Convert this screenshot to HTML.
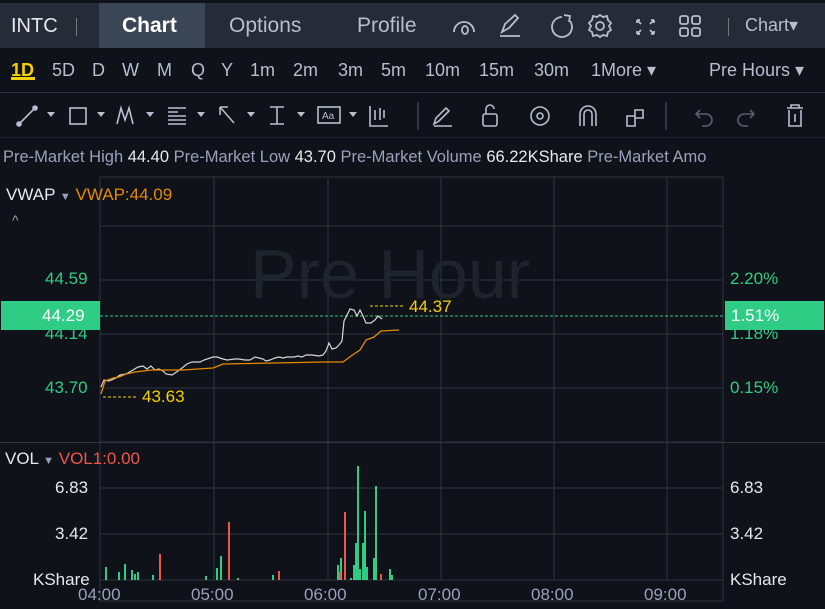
<!DOCTYPE html>
<html><head><meta charset="utf-8"><style>
*{margin:0;padding:0;box-sizing:border-box}
body{width:825px;height:609px;background:#0f1218;font-family:"Liberation Sans",sans-serif;overflow:hidden;position:relative;color:#e6e8ee}
.top{position:absolute;left:0;top:3px;width:825px;height:45px;background:#262b38}
.t{position:absolute;font-size:21px;color:#b8bdd0;top:13px}
.row2{position:absolute;top:48px;left:0;width:825px;height:45px;border-bottom:1px solid #2a2f3a}
.r2{position:absolute;top:60px;font-size:18px;color:#b8bdd0}
.info{position:absolute;top:148px;left:3px;font-size:16.5px;white-space:nowrap;color:#9aa0bc}
.info b{font-weight:normal;color:#e6e8ee}
.ax{position:absolute;font-size:17px}
</style></head><body>
<div class="top"></div>
<div style="position:absolute;left:99px;top:3px;width:106px;height:45px;background:#3a4556"></div>
<div class="t" style="left:11px;color:#e6e8ee;top:15px;font-size:20px">INTC</div>
<div style="position:absolute;left:76px;top:18px;width:1px;height:18px;background:#777"></div>
<div class="t" style="left:122px;color:#fff;font-weight:bold;top:14px">Chart</div>
<div class="t" style="left:229px;top:14px">Options</div>
<div class="t" style="left:357px;top:14px">Profile</div>
<svg style="position:absolute;left:450px;top:12px" width="270" height="28" fill="none" stroke="#b8bdd0" stroke-width="1.8">
<path d="M4 20a10 10 0 1 1 20 0M12 18a3 4 0 1 0 6 0a3 4 0 0 0-6 0"/>
<path d="M50 24h20M52 20l3-8 10-9 3 3-9 10z"/>
<path d="M112 5a10 10 0 1 0 8 4M114 3l6 1-1 6"/>
<circle cx="150" cy="14" r="4"/><path d="M150 3l3 2 4-1 1 4 3 3-2 3 2 4-3 2-1 4-4-1-3 2-3-2-4 1-1-4-3-2 2-4-2-3 3-3 1-4 4 1z"/>
<path d="M187 8l4 4M187 8v3M187 8h3M204 8l-4 4M204 8v3M204 8h-3M187 22l4-4M187 22v-3M187 22h3M204 22l-4-4M204 22v-3M204 22h-3"/>
<rect x="230" y="4" width="8" height="8" rx="2"/><rect x="242" y="4" width="8" height="8" rx="2"/><rect x="230" y="16" width="8" height="8" rx="2"/><rect x="242" y="16" width="8" height="8" rx="2"/>
</svg>
<div style="position:absolute;left:728px;top:18px;width:1px;height:18px;background:#777"></div>
<div class="t" style="left:745px;font-size:18px;top:15px">Chart▾</div>
<div class="row2"></div>
<div class="r2" style="left:11px;color:#f4d000;font-weight:bold">1D</div>
<div style="position:absolute;left:11px;top:77px;width:24px;height:3px;background:#f4d000"></div>
<div class="r2" style="left:52px">5D</div><div class="r2" style="left:92px">D</div><div class="r2" style="left:122px">W</div><div class="r2" style="left:157px">M</div><div class="r2" style="left:191px">Q</div><div class="r2" style="left:221px">Y</div><div class="r2" style="left:250px">1m</div><div class="r2" style="left:293px">2m</div><div class="r2" style="left:338px">3m</div><div class="r2" style="left:381px">5m</div><div class="r2" style="left:425px">10m</div><div class="r2" style="left:479px">15m</div><div class="r2" style="left:534px">30m</div><div class="r2" style="left:591px">1More ▾</div><div class="r2" style="left:709px">Pre Hours ▾</div>
<svg style="position:absolute;left:0;top:94px" width="825" height="44" fill="none" stroke="#b8bdd0" stroke-width="1.6">
<path d="M19 30l16-16"/><circle cx="19" cy="30" r="2" fill="#b8bdd0"/><circle cx="35" cy="14" r="2" fill="#b8bdd0"/>
<path d="M47 18h8l-4 5z M97 18h8l-4 5z M146 18h8l-4 5z M197 18h8l-4 5z M247 18h8l-4 5z M297 18h8l-4 5z M349 18h8l-4 5z" fill="#b8bdd0" stroke="none"/>
<rect x="70" y="14" width="16" height="16"/>
<path d="M117 30l4-16 4 12 4-12 4 16"/>
<path d="M168 14h18M168 18h10M168 22h18M168 26h18M168 30h18"/>
<path d="M220 13l14 16M220 13v8M220 13h8"/>
<path d="M270 13h14M270 30h14M277 13v17"/>
<rect x="318" y="13" width="22" height="16"/><text x="322" y="25" font-size="10" fill="#b8bdd0" stroke="none">Aa</text>
<path d="M370 12v20h18M375 16v10M380 14v12M384 16v8"/>
<path d="M418 8v28" stroke="#3a3f4a"/>
<path d="M434 30l2-6 10-10 3 3-10 10zM434 32h18"/>
<rect x="483" y="20" width="14" height="12" rx="2"/><path d="M486 20v-5a4 4 0 0 1 8 0"/>
<circle cx="540" cy="22" r="9"/><circle cx="540" cy="22" r="3"/>
<path d="M580 32v-12a8 8 0 0 1 16 0v12M584 32v-12a4 4 0 0 1 8 0v12"/>
<path d="M627 22h8v10h-8zM635 16h8v8h-8z"/>
<path d="M666 8v28" stroke="#3a3f4a"/>
<path d="M700 16l-4 4 4 4M696 20h10a6 6 0 0 1 0 12h-4" stroke="#5a5f6a"/>
<path d="M750 16l4 4-4 4M754 20h-10a6 6 0 0 0 0 12h4" stroke="#5a5f6a"/>
<path d="M787 14h16M791 14v-3h8v3M789 16v16h12v-16M795 20v8"/>
</svg>
<div style="position:absolute;top:137px;left:0;width:825px;height:1px;background:#1e222b"></div>
<div class="info">Pre-Market High <b>44.40</b> Pre-Market Low <b>43.70</b> Pre-Market Volume <b>66.22KShare</b> Pre-Market Amo</div>
<svg style="position:absolute;left:0;top:0" width="825" height="609">
<g stroke="#2e3442" stroke-width="1">
<path d="M100 177h623v424H100z" fill="none"/>
<path d="M100 226h623M100 280h623M100 334h623M100 388h623M100 442h623M100 488h623M100 534h623M100 580h623"/>
<path d="M214 177v403M328 177v403M441 177v403M554 177v403M667 177v403"/>
</g>
<text x="250" y="298" font-size="70" fill="#1f232b">Pre Hour</text>
<path d="M100 316h623" stroke="#2ecc85" stroke-dasharray="3,2"/>
<path d="M101 387l3-7 5 1 7-3 4-3 6-1 7-4 5-3 5-1 4 3 4-3 4 4 4-1 4 2 3 3 6 1 6-4 4-3 5-4 5-2 8 0 4-2 9-3 4 0 6 2 4 1 8-1 4 0 6 1 5 0 5-3 4 1 4 1 3 2 4-1 5-2 4-1 4 1 4-1 7 0 4-1 4 1 4-2 6 0 7 1 4-1 3-4 3-8 3 6 4-1 3-3 3-4 2-20 6-12 4 1 3 6 3-6 3 6 3 7 5 0 4-3 3-4 4 3" fill="none" stroke="#d8d8d8" stroke-width="1.2"/>
<path d="M101 394l4-13 8-3 6-1 7-3 9-2 17-2 31 0 30-2 10-4 100-2 20 0 8-6 9-6 6-10 8-3 7-6 18-1" fill="none" stroke="#e68a00" stroke-width="1.3"/>
<path d="M103 397h34M370 306h34" stroke="#f4d000" stroke-dasharray="3,2"/>
<text x="142" y="402" font-size="17" fill="#f4d000">43.63</text>
<text x="409" y="312" font-size="17" fill="#f4d000">44.37</text>
<g fill="#2ecc85">
<rect x="105" y="567" width="2" height="13"/><rect x="118" y="572" width="2" height="8"/><rect x="124" y="564" width="2" height="16"/><rect x="131" y="570" width="2" height="10"/><rect x="134" y="574" width="2" height="6"/><rect x="137" y="572" width="2" height="8"/><rect x="152" y="575" width="2" height="5"/><rect x="205" y="576" width="2" height="4"/><rect x="216" y="568" width="2" height="12"/><rect x="220" y="556" width="2" height="24"/><rect x="237" y="578" width="2" height="2"/><rect x="272" y="575" width="2" height="5"/>
<rect x="337" y="565" width="2" height="15"/><rect x="340" y="558" width="2" height="22"/><rect x="350" y="578" width="2" height="2"/><rect x="353" y="565" width="2" height="15"/><rect x="355" y="543" width="2" height="37"/><rect x="357" y="466" width="2" height="114"/><rect x="359" y="569" width="2" height="11"/><rect x="362" y="543" width="2" height="37"/><rect x="364" y="511" width="2" height="69"/><rect x="366" y="567" width="2" height="13"/><rect x="373" y="558" width="2" height="22"/><rect x="375" y="486" width="2" height="94"/><rect x="389" y="569" width="2" height="11"/><rect x="391" y="575" width="2" height="5"/>
</g>
<g fill="#f0554a">
<rect x="159" y="554" width="2" height="26"/><rect x="228" y="522" width="2" height="58"/><rect x="278" y="571" width="2" height="9"/><rect x="344" y="512" width="2" height="68"/><rect x="339" y="572" width="2" height="8"/><rect x="380" y="574" width="2" height="6"/>
</g>
</svg>
<div style="position:absolute;left:0;top:177px;width:99px;height:432px;background:#0f1218"></div>
<div style="position:absolute;left:724px;top:177px;width:101px;height:432px;background:#0f1218"></div>
<div class="ax" style="left:6px;top:185px;color:#e6e8ee">VWAP <span style="color:#9aa0bc;font-size:11px">▼</span> <span style="color:#e68a00">VWAP:44.09</span></div>
<div class="ax" style="left:12px;top:212px;color:#9aa0bc;font-size:14px">^</div>
<div class="ax" style="left:45px;top:269px;color:#2ecc85">44.59</div>
<div class="ax" style="left:45px;top:324px;color:#2ecc85">44.14</div>
<div class="ax" style="left:45px;top:378px;color:#2ecc85">43.70</div>
<div style="position:absolute;left:1px;top:301px;width:99px;height:29px;background:#2ecc85;color:#fff;font-size:17px;padding:5px 0 0 41px">44.29</div>
<div class="ax" style="left:730px;top:269px;color:#2ecc85">2.20%</div>
<div class="ax" style="left:730px;top:324px;color:#2ecc85">1.18%</div>
<div class="ax" style="left:730px;top:378px;color:#2ecc85">0.15%</div>
<div style="position:absolute;left:725px;top:301px;width:99px;height:29px;background:#2ecc85;color:#fff;font-size:17px;padding:5px 0 0 6px">1.51%</div>
<div style="position:absolute;left:0;top:442px;width:825px;height:1px;background:#2e3442"></div>
<div class="ax" style="left:5px;top:449px;color:#e6e8ee">VOL <span style="color:#9aa0bc;font-size:11px">▼</span> <span style="color:#f0554a">VOL1:0.00</span></div>
<div class="ax" style="left:55px;top:478px">6.83</div>
<div class="ax" style="left:55px;top:524px">3.42</div>
<div class="ax" style="left:33px;top:570px">KShare</div>
<div class="ax" style="left:730px;top:478px">6.83</div>
<div class="ax" style="left:730px;top:524px">3.42</div>
<div class="ax" style="left:730px;top:570px">KShare</div>
<div class="ax" style="left:78px;top:585px;color:#9aa0bc;font-size:17px">04:00</div>
<div class="ax" style="left:191px;top:585px;color:#9aa0bc;font-size:17px">05:00</div>
<div class="ax" style="left:304px;top:585px;color:#9aa0bc;font-size:17px">06:00</div>
<div class="ax" style="left:418px;top:585px;color:#9aa0bc;font-size:17px">07:00</div>
<div class="ax" style="left:531px;top:585px;color:#9aa0bc;font-size:17px">08:00</div>
<div class="ax" style="left:644px;top:585px;color:#9aa0bc;font-size:17px">09:00</div>
</body></html>
